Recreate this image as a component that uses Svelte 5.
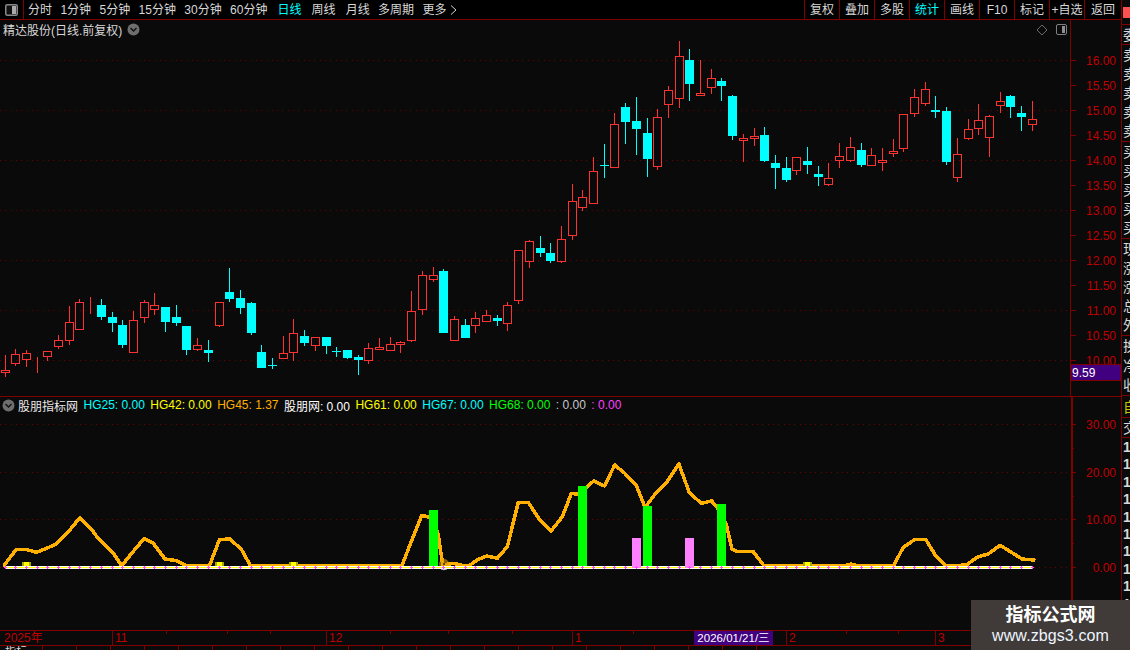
<script>
  const raw = `5 r 355 377 370 372
15 r 349 366 354 363
26 r 350 367 353 359
37 r 357 373 357 357
47 r 351 361 351 356
58 r 335 349 340 346
69 r 306 345 322 340
79 r 299 330 302 329
90 r 297 314 307 307
101 c 299 320 305 317
112 c 312 332 317 323
122 c 320 348 325 345
133 r 311 352 320 352
144 r 300 323 302 317
154 r 293 315 305 309
165 c 307 332 307 322
176 c 305 326 317 323
186 c 326 355 326 350
197 r 338 351 345 349
208 c 340 362 350 353
219 r 302 327 302 325
229 c 268 302 292 299
240 c 290 314 298 308
251 c 302 335 303 333
261 c 345 368 352 368
272 c 358 369 365 365
283 r 336 359 353 358
293 r 319 361 333 352
304 c 330 346 336 343
315 r 337 351 337 345
326 c 337 354 337 346
336 c 347 357 351 351
347 c 350 359 350 358
358 c 355 375 357 360
368 r 343 364 348 360
379 r 338 350 347 349
390 r 337 351 344 350
400 r 341 353 342 344
411 r 291 342 311 340
422 r 271 315 275 309
433 r 267 282 275 279
443 c 269 333 271 333
454 r 316 341 319 340
465 c 319 338 325 338
475 r 312 333 318 325
486 r 310 322 315 321
497 c 315 326 318 321
507 r 302 331 305 323
518 r 250 304 250 300
529 r 240 268 241 261
540 c 236 257 248 253
550 c 243 263 253 261
561 r 226 263 239 261
572 r 184 240 201 235
582 r 190 211 197 207
593 r 157 204 171 203
604 c 144 178 165 165
614 r 113 168 124 167
625 c 103 144 107 122
636 c 97 155 121 129
647 c 118 177 133 159
657 r 109 170 117 166
668 r 86 118 90 104
679 r 41 108 56 98
689 c 49 101 60 84
700 r 60 96 93 95
711 r 69 94 78 87
721 c 78 101 81 86
732 c 95 140 96 136
743 r 134 162 138 140
754 r 128 146 136 138
764 c 127 162 135 161
775 c 155 189 163 168
786 c 157 182 168 180
796 r 157 175 157 170
807 c 147 174 161 165
818 c 166 186 174 177
828 r 163 186 178 184
839 r 143 168 156 160
850 r 137 162 147 160
861 c 143 167 150 165
871 r 148 166 155 165
882 r 148 171 160 162
893 r 139 157 151 153
903 r 114 152 114 148
914 r 89 117 97 113
925 r 82 106 89 103
935 c 96 118 110 112
946 c 107 165 111 162
957 r 138 182 154 177
968 r 119 140 129 138
978 r 104 135 120 128
989 r 115 157 116 137
1000 r 92 113 101 105
1010 c 95 118 96 107
1021 c 106 131 113 117
1032 r 101 131 119 124`;
  const candles = raw.split('\n').map((l) => {
    const p = l.trim().split(' ');
    return { x: +p[0], t: p[1], hi: +p[2], lo: +p[3], top: +p[4], bot: +p[5] };
  });

  const tabs = ['分时', '1分钟', '5分钟', '15分钟', '30分钟', '60分钟', '日线', '周线', '月线', '多周期'];
  const tools = ['复权', '叠加', '多股', '统计', '画线', 'F10', '标记', '+自选', '返回'];
  const prices = [...Array(13).keys()].map((i) => ({ y: 60 + i * 25, v: (16 - i * 0.5).toFixed(2) }));
  const priceGrid = [60, 110, 160, 210, 260, 310, 360];
  const subs = [{ y: 424, v: '30.00' }, { y: 472, v: '20.00' }, { y: 519, v: '10.00' }, { y: 567, v: '0.00' }];
  const minor = [448, 496, 543];
  const legend = [
    ['HG25: 0.00', '#00ffff'], ['HG42: 0.00', '#ffff00'], ['HG45: 1.37', '#ffb000'], ['股朋网: 0.00', '#ffffff'],
    ['HG61: 0.00', '#ffff00'], ['HG67: 0.00', '#00ffff'], ['HG68: 0.00', '#00ff00'], [': 0.00', '#c8c8c8'], [': 0.00', '#ff40ff']
  ];

  const left = [[13,345],[48,299],[80,299],[110,307],[140,295],[170,281],[205,245],[239,204],[280,245],[295,266],[340,310],[365,347],[395,310],[433,265],[460,280],[495,327],[530,332],[560,348],[628,348],[658,270],[690,266],[725,300],[752,348],[1205,348],[1265,196],[1300,205],[1315,255],[1328,345],[1360,340],[1395,348],[1410,345],[1435,328],[1460,318],[1492,325],[1522,290],[1555,157]]
    .map(([x, y]) => [x / 3, 450 + y / 3]);
  const right = [[25,158],[60,212],[92,243],[125,200],[152,130],[172,133],[218,93],[250,108],[280,45],[310,70],[345,108],[370,172],[405,125],[435,95],[470,42],[500,125],[535,160],[567,153],[585,175],[610,222],[627,298],[645,305],[690,305],[722,348],[960,348],[978,342],[1000,348],[1105,348],[1133,293],[1168,268],[1200,268],[1230,318],[1262,348],[1320,345],[1355,320],[1385,312],[1420,286],[1485,327],[1520,330]]
    .map(([x, y]) => [520 + x / 2.958, 450 + y / 3]);
  const line = [...left, ...right].map((p) => p.map((n) => n.toFixed(1)).join(',')).join(' ');

  const greens = [[429, 510], [578, 486], [643, 506], [717, 504]];
  const pinks = [632, 685];
  const yellows = [22, 215, 289, 803];
  const dateLabels = [['2025年', 2], ['11', 112], ['12', 326], ['1', 572], ['2', 786], ['3', 935]];
  const dateTicks = [166, 227, 270, 390, 448, 512, 633, 720, 846, 898];
  const sellRows = ['卖', '卖', '卖', '卖', '卖'];
  const buyRows = ['买', '买', '买', '买', '买'];
  const infoRows = ['现', '涨', '涨', '总', '外'];
  const moreRows = ['换', '净', '收'];
  const nums = Array(11).fill('1');
  const cells = Array(22).fill(0);
</script>

<div class="page">
  <div class="main">
    <header class="toolbar">
      <div class="panel-btn">
        <svg width="13" height="12" viewBox="0 0 13 12"><rect x="0.75" y="0.75" width="11.5" height="10.5" rx="1.5" fill="#111" stroke="#888" stroke-width="1.5"/><rect x="7" y="2" width="4" height="8" fill="#aaa"/></svg>
      </div>
      <nav class="tabs">
        {#each tabs as t, i}
          <span class:on={i === 6} class:wide={i >= 6 && i <= 8}>{t}</span>
        {/each}
        <span class="more">更多<svg width="7" height="10" viewBox="0 0 7 10"><path d="M1 0.5 L6 5 L1 9.5" fill="none" stroke="#d0d0d0"/></svg></span>
      </nav>
      <div class="tools">
        {#each tools as t, i}
          <span class:on={i === 3}>{t}</span>
        {/each}
      </div>
    </header>

    <section class="price">
      <div class="title">
        <span>精达股份(日线.前复权)</span>
        <svg width="13" height="13" viewBox="0 0 13 13"><circle cx="6.5" cy="6.5" r="6" fill="#6e6e6e"/><path d="M3.5 5 L6.5 8 L9.5 5" fill="none" stroke="#111" stroke-width="1.4"/></svg>
      </div>
      <svg class="plot" width="1121" height="376" viewBox="0 20 1121 376">
        {#each priceGrid as y}
          <line class="grid" x1="0" x2="1070" y1={y + 0.5} y2={y + 0.5}/>
        {/each}
        {#each candles as c}
          {#if c.t === 'r'}
            <g class="up">
              <path d="M{c.x + 0.5} {c.hi}V{c.top}M{c.x + 0.5} {c.bot}V{c.lo}"/>
              <rect x={c.x - 3.5} y={c.top + 0.5} width="8" height={c.bot - c.top}/>
            </g>
          {:else}
            <g class="down">
              <rect x={c.x} y={c.hi} width="1" height={c.lo - c.hi}/>
              <rect x={c.x - 4} y={c.top} width="9" height={Math.max(1, c.bot - c.top)}/>
            </g>
          {/if}
        {/each}
        <path class="diamond" d="M1042 25 L1047 30 L1042 35 L1037 30 Z"/>
        <rect x="1056.5" y="24.5" width="10" height="10" rx="1.5" fill="none" stroke="#808080"/>
        <rect x="1062" y="26" width="3" height="7" fill="#909090"/>
        <line class="axis" x1="1070.5" x2="1070.5" y1="20" y2="396"/>
        {#each prices as p}
          <line class="axis" x1="1071" x2="1076" y1={p.y + 0.5} y2={p.y + 0.5}/>
          <text x="1116" y={p.y + 5}>{p.v}</text>
        {/each}
        <rect x="1071" y="364.5" width="50" height="16" fill="#400080" stroke="#800000"/>
        <text class="last" x="1072" y="377">9.59</text>
      </svg>
    </section>

    <section class="sub">
      <div class="legend">
        <svg width="13" height="13" viewBox="0 0 13 13"><circle cx="6.5" cy="6.5" r="6" fill="#6e6e6e"/><path d="M3.5 5 L6.5 8 L9.5 5" fill="none" stroke="#111" stroke-width="1.4"/></svg>
        <span class="name">股朋指标网</span>
        {#each legend as [t, col]}
          <span style="color: {col}">{t}</span>
        {/each}
      </div>
      <svg class="plot" width="1121" height="233" viewBox="0 397 1121 233">
        {#each subs as s}
          <line class="grid" x1="0" x2="1071" y1={s.y + 0.5} y2={s.y + 0.5}/>
        {/each}
        <polyline class="curve" points={line}/>
        <circle cx="444" cy="564" r="5" fill="#e0a000" fill-opacity="0.6"/>
        <circle cx="444" cy="564" r="1" fill="#222"/>
        <path d="M439 567 A6 6 0 0 0 449 567" fill="none" stroke="#ddd"/>
        {#each greens as [x, y]}
          <rect x={x} y={y} width="9" height={567 - y} fill="#00ff00"/>
        {/each}
        <rect x="5" y="566" width="1028" height="1" fill="#ffffff"/>
        <rect x="5" y="567" width="1028" height="1" fill="#ffff00"/>
        <rect x="5" y="568" width="1028" height="1" fill="#f8f8f8"/>
        {#each pinks as x}
          <rect x={x} y="538" width="9" height="30" fill="#ff80ff"/>
        {/each}
        {#each yellows as x}
          <rect x={x} y="562" width="9" height="4" fill="#a8a800"/>
          <rect x={x + 2} y="562" width="5" height="4" fill="#ffff00"/>
        {/each}
        {#each candles as c}
          <path class="plus" d="M{c.x - 1} 567.5H{c.x + 2}M{c.x + 0.5} 566V569"/>
        {/each}
        <rect x="1071" y="397" width="2" height="233" fill="#800000"/>
        {#each subs as s}
          <line class="axis" x1="1071" x2="1076" y1={s.y + 0.5} y2={s.y + 0.5}/>
          <text x="1116" y={s.y + 5}>{s.v}</text>
        {/each}
        {#each minor as y}
          <line class="axis" x1="1071" x2="1074" y1={y + 0.5} y2={y + 0.5}/>
        {/each}
      </svg>
    </section>

    <section class="dates">
      {#each dateLabels as [t, x]}
        <span class="date" style="left: {x}px">{t}</span>
      {/each}
      {#each dateTicks as x}
        <i class="tick" style="left: {x}px"></i>
      {/each}
      <span class="cursor">2026/01/21/三</span>
    </section>

    <footer class="status">
      <span class="first">指标</span>
      {#each cells as _}
        <span class="cell"></span>
      {/each}
    </footer>
  </div>

  <aside class="side">
    <div class="flag"><i></i></div>
    <div class="grp one"><span>委</span></div>
    <div class="grp five">{#each sellRows as r}<span>{r}</span>{/each}</div>
    <div class="grp five">{#each buyRows as r}<span>{r}</span>{/each}</div>
    <div class="grp five">{#each infoRows as r}<span>{r}</span>{/each}</div>
    <div class="grp three">{#each moreRows as r}<span>{r}</span>{/each}</div>
    <div class="grp self"><span>自</span></div>
    <div class="grp deal"><span>交</span></div>
    <div class="grp digits">{#each nums as n}<span>{n}</span>{/each}</div>
  </aside>

  <div class="mark">
    <b>指标公式网</b>
    <span>www.zbgs3.com</span>
  </div>
</div>

<style>
  :global(body) { margin: 0; background: #0a0a0a; }
  .page {
    position: relative;
    display: flex;
    width: 1130px;
    height: 650px;
    overflow: hidden;
    background: #0a0a0a;
    color: #d8d8d8;
    font: 12px "Liberation Sans", "Noto Sans CJK SC", sans-serif;
  }
  .main { width: 1121px; display: flex; flex-direction: column; }
  .toolbar {
    display: flex;
    box-sizing: border-box;
    height: 20px;
    border-bottom: 1px solid #800000;
    background: #000;
    line-height: 20px;
  }
  .panel-btn {
    box-sizing: border-box;
    width: 24px;
    border-right: 1px solid #800000;
    display: flex;
    align-items: center;
    justify-content: center;
    padding-right: 1px;
  }
  .tabs { display: flex; gap: 8.4px; padding-left: 4px; flex: 1; }
  .tabs .wide { margin-left: 1.7px; }
  .tabs .on, .tools .on { color: #00ffff; }
  .more { display: inline-flex; align-items: center; gap: 3px; }
  .tools { display: flex; }
  .tools span {
    box-sizing: border-box;
    width: 35px;
    border-left: 1px solid #800000;
    text-align: center;
  }
  .tools span:last-child { width: 37px; }

  .price { position: relative; height: 376px; border-bottom: 1px solid #800000; }
  .sub { position: relative; height: 233px; }
  .plot { display: block; }
  .plot text { font: 12px "Liberation Sans", sans-serif; fill: #c00000; text-anchor: end; }
  .plot text.last { fill: #ffffff; text-anchor: start; }
  .grid { stroke: #6a0000; stroke-dasharray: 1 4.33; shape-rendering: crispEdges; }
  .axis { stroke: #800000; shape-rendering: crispEdges; }
  .diamond { fill: none; stroke: #6a6a6a; }
  .up path, .up rect { fill: none; stroke: #ff3232; shape-rendering: crispEdges; }
  .down rect { fill: #00ffff; shape-rendering: crispEdges; }
  .curve { fill: none; stroke: #ffb000; stroke-width: 3.5; stroke-linejoin: round; stroke-linecap: round; shape-rendering: crispEdges; }
  .plus { fill: none; stroke: #ff40ff; shape-rendering: crispEdges; }

  .title, .legend {
    position: absolute;
    top: 0;
    left: 0;
    display: flex;
    align-items: center;
    z-index: 1;
  }
  .title { top: 0; left: 3px; height: 18px; gap: 5px; }
  .legend { top: 0; left: 2px; height: 16px; gap: 5.45px; }
  .legend .name { margin-left: -2.4px; color: #e8e8e8; }

  .dates {
    position: relative;
    box-sizing: border-box;
    height: 16px;
    border-top: 1px solid #800000;
    border-bottom: 1px solid #800000;
    line-height: 15px;
  }
  .date {
    position: absolute;
    top: 0;
    padding-left: 2px;
    height: 14px;
    border-left: 1px solid #800000;
    color: #c00000;
  }
  .date:first-child { border-left: none; }
  .tick { position: absolute; top: 0; width: 1px; height: 3px; background: #800000; }
  .cursor {
    position: absolute;
    top: 0;
    left: 694px;
    width: 79px;
    height: 14px;
    background: #400080;
    color: #fff;
    text-align: center;
    font-size: 11.5px;
  }

  .status { display: flex; height: 4px; overflow: hidden; padding-left: 5px; line-height: 12px; }
  .status .first { width: 37px; color: #ddd; font-size: 11px; }
  .status .cell { width: 33px; border-left: 1px solid #800000; }

  .side {
    box-sizing: border-box;
    width: 9px;
    border-left: 1px solid #800000;
    display: flex;
    flex-direction: column;
    overflow: hidden;
    font-size: 14px;
    color: #d8d8d8;
  }
  .flag { height: 25px; border-bottom: 1px solid #800000; box-sizing: border-box; padding: 7px 0 0 1px; }
  .flag i { display: block; width: 7px; height: 11px; background: #ff5050; }
  .grp { display: flex; flex-direction: column; box-sizing: border-box; border-bottom: 1px solid #800000; white-space: nowrap; }
  .grp span { flex: 1; display: flex; align-items: center; padding-left: 1px; line-height: 1; }
  .one { height: 20px; }
  .five { height: 97px; }
  .three { height: 60px; }
  .self { height: 22px; color: #c8c800; }
  .deal { height: 20px; }
  .digits { flex: 1; border-bottom: none; font-weight: bold; padding-bottom: 20px; }

  .mark {
    position: absolute;
    right: 0;
    bottom: 0;
    width: 159px;
    height: 50px;
    box-sizing: border-box;
    padding-top: 4px;
    background: #403a38;
    display: flex;
    flex-direction: column;
    align-items: center;
    color: #fff;
    z-index: 2;
  }
  .mark b { font-size: 18px; line-height: 22px; }
  .mark span { font-size: 16px; line-height: 20px; letter-spacing: 0.1px; color: #eef6ff; }
</style>
